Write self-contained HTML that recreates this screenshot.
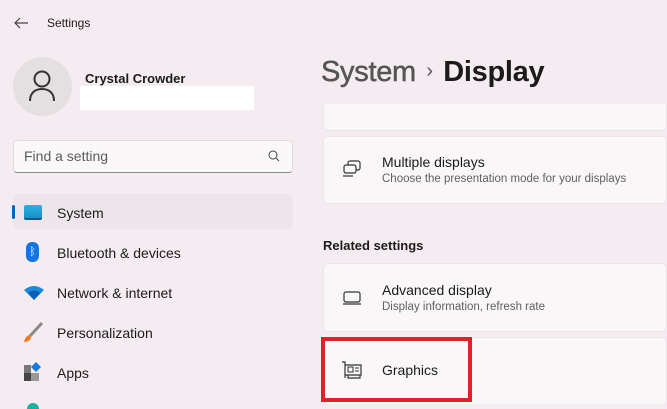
<!DOCTYPE html><html style="overflow:hidden;height:409px"><head><style>
body{margin:0;width:667px;height:409px;overflow:hidden;background:#f4ecf1;font-family:"Liberation Sans",sans-serif;position:relative;color:#1b1b1b}
.a{position:absolute}
.card{position:absolute;left:323px;right:0;background:#faf7f9;border:1px solid #ebe4e8;border-radius:5px}
.nav{position:absolute;left:57px;font-size:14px}
</style></head><body>
<svg class="a" style="left:13px;top:16px" width="16" height="14"><path d="M15 7H2M7 2L2 7l5 5" stroke="#444" stroke-width="1.2" fill="none"/></svg>
<div class="a" style="left:47px;top:16px;font-size:12px">Settings</div>
<div class="a" style="left:13px;top:57px;width:59px;height:59px;border-radius:50%;background:#e4e0e2"></div>
<svg class="a" style="left:28px;top:68px" width="30" height="36"><circle cx="14" cy="11" r="7.5" stroke="#333" stroke-width="2" fill="none"/><path d="M2 33c0-8 5-12 12-12s12 4 12 12" stroke="#333" stroke-width="2" fill="none"/></svg>
<div class="a" style="left:85px;top:71px;font-size:13px;font-weight:bold">Crystal Crowder</div>
<div class="a" style="left:80px;top:86px;width:174px;height:24px;background:#fff"></div>
<div class="a" style="left:13px;top:140px;width:278px;height:31px;background:#fbf8fa;border:1px solid #e2dce0;border-bottom-color:#8a8a8a;border-radius:4px"></div>
<div class="a" style="left:24px;top:148px;font-size:14px;color:#5c5c5c">Find a setting</div>
<svg class="a" style="left:268px;top:150px" width="12" height="12"><circle cx="5" cy="5" r="4" stroke="#444" fill="none"/><path d="M8 8l3 3" stroke="#444"/></svg>
<div class="a" style="left:13px;top:194px;width:280px;height:35px;background:#ece5ea;border-radius:5px"></div>
<div class="a" style="left:12px;top:205px;width:3px;height:14px;background:#0067c0;border-radius:2px"></div>
<div class="a" style="left:24px;top:205px;width:18px;height:13px;background:linear-gradient(#2fb0e0,#1591c8);border-radius:2px;border-bottom:2px solid #0b5a8a"></div>
<div class="nav" style="top:205px">System</div>
<div class="a" style="left:26px;top:242px;width:13px;height:20px;background:#1575e0;border-radius:6px;color:#fff;font-size:11px;text-align:center;line-height:20px">ᛒ</div>
<div class="nav" style="top:245px">Bluetooth &amp; devices</div>
<svg class="a" style="left:23px;top:285px" width="22" height="16"><path d="M1 5Q11-3 21 5L11 15Z" fill="#1a8ad9"/><path d="M5 8Q11 3 17 8L11 15Z" fill="#0a60b8"/></svg>
<div class="nav" style="top:285px">Network &amp; internet</div>
<svg class="a" style="left:22px;top:322px" width="22" height="22"><path d="M20 1L8 14" stroke="#8a8a8a" stroke-width="3"/><path d="M8 13c-3 0-5 3-6 7 4 0 7-2 7-5z" fill="#f07a28"/></svg>
<div class="nav" style="top:325px">Personalization</div>
<svg class="a" style="left:23px;top:362px" width="20" height="20"><rect x="1" y="3" width="7" height="8" fill="#777"/><rect x="1" y="11" width="7" height="8" fill="#444"/><rect x="8" y="11" width="8" height="8" fill="#999"/><path d="M13 0l5 5-5 5-5-5z" fill="#1a7ad9"/></svg>
<div class="nav" style="top:365px">Apps</div>
<div class="a" style="left:27px;top:403px;width:12px;height:12px;border-radius:50%;background:#1ab0a0"></div>
<div class="a" style="left:321px;top:56px;font-size:29px;color:#555;font-weight:bold;letter-spacing:-0.3px;white-space:nowrap"><span style="font-weight:normal;-webkit-text-stroke:0.5px #555">System</span><span style="font-size:20px;position:relative;top:-4px;font-weight:normal">&nbsp;&nbsp;›&nbsp;&nbsp;</span><span style="color:#1b1b1b">Display</span></div>
<div class="card" style="top:104px;height:26px;border-top:none;border-radius:0 0 5px 5px"></div>
<div class="card" style="top:136px;height:66px"></div>
<svg class="a" style="left:341px;top:159px" width="22" height="20"><rect x="7" y="2" width="12" height="9" rx="2" stroke="#333" fill="none" stroke-width="1.2"/><rect x="3" y="6" width="12" height="8" rx="2" stroke="#333" fill="#faf7f9" stroke-width="1.2"/><path d="M2 17h10" stroke="#333" stroke-width="1.2"/></svg>
<div class="a" style="left:382px;top:154px;font-size:14px">Multiple displays</div>
<div class="a" style="left:382px;top:173px;font-size:11.5px;color:#606060">Choose the presentation mode for your displays</div>
<div class="a" style="left:323px;top:238px;font-size:13px;font-weight:bold">Related settings</div>
<div class="card" style="top:263px;height:67px"></div>
<svg class="a" style="left:341px;top:290px" width="22" height="16"><rect x="3" y="2" width="16" height="10" rx="2" stroke="#333" fill="none" stroke-width="1.2"/><path d="M2 14h18" stroke="#333" stroke-width="1.2"/></svg>
<div class="a" style="left:382px;top:282px;font-size:14px">Advanced display</div>
<div class="a" style="left:382px;top:301px;font-size:11.5px;color:#606060">Display information, refresh rate</div>
<div class="card" style="top:337px;height:66px;border-bottom:none"></div>
<svg class="a" style="left:341px;top:361px" width="22" height="20"><path d="M1 1h3v16M4 4h16v10H4M7 14v3h12v-3" stroke="#333" fill="none" stroke-width="1.2"/><rect x="7" y="6" width="5" height="5" stroke="#333" fill="none"/><path d="M14 7h4M14 10h4" stroke="#333"/></svg>
<div class="a" style="left:382px;top:362px;font-size:14px">Graphics</div>
<div class="a" style="left:321px;top:337px;width:143px;height:57px;border:4px solid #e0202a"></div>
</body></html>
